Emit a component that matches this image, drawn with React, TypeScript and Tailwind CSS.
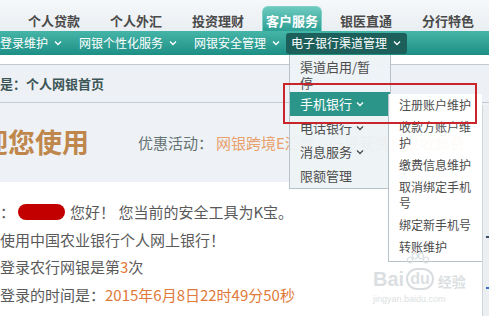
const font = "font-['Noto_Sans_CJK_SC','Noto_Sans',sans-serif]";

function Chevron({ className = "" }: { className?: string }) {
  return (
    <svg width="8" height="6" viewBox="0 0 8 6" className={className}>
      <path d="M1 1.5 L4 4.5 L7 1.5" fill="none" stroke="currentColor" strokeWidth="1.3" />
    </svg>
  );
}

const tabs = ["个人贷款", "个人外汇", "投资理财", "客户服务", "银医直通", "分行特色"];

const menu = [
  { label: "渠道启用/暂停" },
  { label: "手机银行", arrow: true, active: true },
  { label: "电话银行", arrow: true },
  { label: "消息服务", arrow: true },
  { label: "限额管理" },
];

const sub = ["注册账户维护", "收款方账户维护", "缴费信息维护", "取消绑定手机号", "绑定新手机号", "转账维护"];

export default function App() {
  return (
    <div className={`relative w-[489px] h-[316px] overflow-hidden bg-white ${font}`}>
      {/* tabs */}
      <div className="flex items-end h-[31px] pl-[13px] bg-gradient-to-b from-[#f6f8fa] to-[#e9eef2]">
        {tabs.map((t) =>
          t === "客户服务" ? (
            <div key={t} className="w-[82px] h-[25px] px-[3px]">
              <div className="h-full rounded-t-[6px] border border-b-0 border-[#7fd0c6] bg-gradient-to-b from-[#6ccabf] to-[#2b9f94] flex items-center justify-center pt-[4px] text-[13px] font-bold text-white">
                {t}
              </div>
            </div>
          ) : (
            <div key={t} className="w-[82px] h-[25px] shrink-0 flex items-center justify-center pt-[4px] text-[13px] font-bold text-[#4a4a4a]">
              {t}
            </div>
          )
        )}
      </div>

      {/* nav bar */}
      <div className="flex items-center h-[24px] bg-gradient-to-b from-[#45b5a8] to-[#1c8f85] text-[12px] text-white">
        <div className="flex items-center">
          登录维护<Chevron className="ml-[6px]" />
        </div>
        <div className="flex items-center ml-[17px]">
          网银个性化服务<Chevron className="ml-[6px]" />
        </div>
        <div className="flex items-center ml-[17px]">
          网银安全管理<Chevron className="ml-[6px]" />
        </div>
        <div className="flex items-center ml-[6px] h-[21px] pl-[5px] pr-[6px] rounded-[3px] bg-[#1d5f5a]">
          电子银行渠道管理<Chevron className="ml-[6px]" />
        </div>
      </div>

      {/* breadcrumb */}
      <div className="mt-[9px] h-[39px] border-y border-[#c3cbd1] bg-[#edf1f5] flex items-center text-[13px] font-bold text-[#3c5656]">
        是：个人网银首页
      </div>

      {/* welcome */}
      <div className="h-[79px] bg-[#eef2f6] flex items-center whitespace-nowrap">
        <span className="ml-[-46px] text-[27px] font-bold text-[#c0874d]">欢迎您使用</span>
        <span className="ml-[49px] mt-[2px] text-[15px] text-[#667373]">优惠活动：</span>
        <span className="ml-[3px] mt-[2px] text-[15px] text-[#e9a06c]">网银跨境E汇款，好评获赞！仅收邮费</span>
      </div>

      {/* body */}
      <div className="pt-[16px] text-[15px] leading-[27.5px] text-[#5a5a5a] whitespace-nowrap">
        <div className="flex items-center">
          ：<span className="inline-block w-[47px] h-[16px] rounded-full bg-[#c20000] ml-[3px] mr-[5px]" />
          您好！ 您当前的安全工具为K宝。
        </div>
        <div>使用中国农业银行个人网上银行！</div>
        <div>
          登录农行网银是第<span className="text-[#e07a3a]">3</span>次
        </div>
        <div>
          登录的时间是：<span className="text-[#e07a3a]">2015年6月8日22时49分50秒</span>
        </div>
      </div>

      {/* right edge panel */}
      <div className="absolute left-[482px] top-[105px] bottom-0 w-[7px] bg-[#eceff2] border-l border-[#cfd6db]">
        <span className="absolute left-[3px] top-[131px] w-[3px] h-[2px] bg-[#36506a]" />
        <span className="absolute left-[3px] top-[182px] w-[3px] h-[2px] bg-[#3a6fd0]" />
      </div>

      {/* dropdown */}
      <div className="absolute left-[289px] top-[55px] w-[102px] h-[134px] bg-[#edf2f5]/95 border border-t-0 border-[#b6c2ca] text-[13px] leading-[16px] text-[#4d4d4d]">
        {menu.map((m, i) => (
          <div
            key={m.label}
            className={`pl-[10px] pr-[13px] ${i === 0 ? "pt-[4px] h-[37px] overflow-hidden" : "h-[24px] flex items-center"} ${
              m.active ? "bg-[#2b958a] text-white" : ""
            }`}
          >
            {m.label}
            {m.arrow && <Chevron className="ml-[4px]" />}
          </div>
        ))}
      </div>

      {/* submenu */}
      <div className="absolute left-[388px] top-[94px] w-[94px] pb-[3px] bg-white/95 border-l border-b border-[#b6c2ca] text-[12px] leading-[16px] text-[#4d4d4d]">
        {sub.map((s) => (
          <div key={s} className="pl-[10px] pr-[8px] py-[3px]">
            {s}
          </div>
        ))}
      </div>

      {/* highlight box */}
      <div className="absolute left-[283px] top-[83px] w-[194px] h-[41px] border-2 border-[#c9252c]" />

      {/* watermark */}
      <div className="absolute left-[373px] top-[252px] w-[108px] text-[#dcdfe2] whitespace-nowrap pointer-events-none">
        <svg width="26" height="16" viewBox="0 0 26 16" className="ml-[32px]">
          <g fill="none" stroke="#dadde0" strokeWidth="1.2">
            <ellipse cx="5" cy="8" rx="2.5" ry="3" />
            <ellipse cx="10" cy="4" rx="2.5" ry="3" />
            <ellipse cx="16" cy="4" rx="2.5" ry="3" />
            <ellipse cx="21" cy="8" rx="2.5" ry="3" />
          </g>
        </svg>
        <div className="flex items-end text-[20px] font-bold leading-[22px] font-['Liberation_Sans',sans-serif]">
          <span>Bai</span>
          <span className="ml-[2px] px-[2px] rounded-full border-2 border-[#dadde0] text-[16px] leading-[18px]">du</span>
          <span className="ml-[4px] text-[14px] leading-[18px] font-['Noto_Sans_CJK_SC',sans-serif]">经验</span>
        </div>
        <div className="mt-[4px] text-[9px] leading-[10px] font-['Liberation_Sans',sans-serif]">jingyan.baidu.com</div>
      </div>
    </div>
  );
}
